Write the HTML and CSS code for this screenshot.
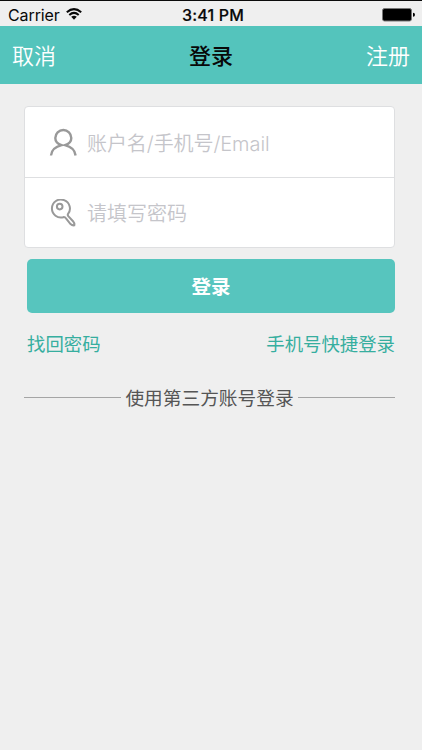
FILE: index.html
```html
<!DOCTYPE html>
<html lang="zh-CN">
<head>
<meta charset="utf-8">
<title>登录</title>
<link rel="stylesheet" href="styles.css">
</head>
<body>
<header class="status">
  <div class="carrier"><span>Carrier</span>
    <svg class="wifi" width="16" height="12" viewBox="0 0 16 12"><g fill="none" stroke="#080808" stroke-width="2"><path d="M.8 4.200Q8-2 15.200 4.200"/><path d="M3.300 7Q8 2.800 12.700 7"/></g><path d="M5.200 8.800Q8 6.500 10.800 8.800L8 11.800Z" fill="#080808"/></svg>
  </div>
  <time class="clock">3:41 PM</time>
  <svg class="battery" width="33" height="14" viewBox="0 0 33 14"><rect x=".5" y=".5" width="29" height="12.500" rx="2" fill="#000" stroke="#777"/><path d="M31 4.800Q33 5 33 6.800T31 8.800Z" fill="#000"/></svg>
</header>
<nav class="nav">
  <a class="nav-left">取消</a>
  <h1>登录</h1>
  <a class="nav-right">注册</a>
</nav>
<main>
  <div class="fields">
    <label class="field">
      <svg class="icon" width="28" height="28" viewBox="0 0 28 28"><path d="M2 27.500C2.500 22.500 6 18.800 12.600 17.200C9 16 6.300 13.500 6.300 10A8 8 0 0 1 22.300 10C22.300 13.500 19.600 16 16 17.200C22.500 18.800 26 22.500 26.600 27.500"/></svg>
      <span>账户名/手机号/Email</span>
    </label>
    <label class="field">
      <svg class="icon" width="28" height="28" viewBox="0 0 28 28"><path d="M14.600 18.100A9 9 0 1 1 18.900 15.200Q18.500 16.200 19.300 17.200L24 22.200Q25.800 24.500 25.300 26.300Q23.300 26.700 21.500 25L17 19.300Q16.100 18 14.600 18.100Z"/><circle cx="10.700" cy="7.600" r="2.800"/></svg>
      <span>请填写密码</span>
    </label>
  </div>
  <button class="submit">登录</button>
  <div class="links"><a>找回密码</a><a>手机号快捷登录</a></div>
  <div class="divider"><span>使用第三方账号登录</span></div>
</main>
</body>
</html>
```
FILE: styles.css
```css
* { box-sizing: border-box; }
body {
  margin: 0;
  height: 750px;
  background: #efefef;
  border-top: 1px solid #0b0b0b;
  font-family: Inter, "Noto Sans CJK SC", sans-serif;
  overflow: hidden;
}
.status {
  height: 25px;
  display: grid;
  grid-template-columns: 1fr auto 1fr;
  align-items: center;
  padding: 2px 7px 0 8px;
  color: #080808;
  font-size: 16px;
  line-height: 22px;
}
.carrier { display: flex; align-items: center; gap: 6px; letter-spacing: -.1px; }
.wifi { margin-top: -2px; }
.clock { font-weight: 500; letter-spacing: .15px; padding-left: 3px; -webkit-text-stroke: .2px #080808; }
.battery { justify-self: end; }
.nav {
  height: 58px;
  display: grid;
  grid-template-columns: 1fr auto 1fr;
  align-items: center;
  padding: 2px 12px 0;
  background: #54c4bc;
  color: #fff;
  font-size: 22px;
  font-weight: 350;
  line-height: 32px;
}
.nav h1 {
  margin: 0;
  color: #080808;
  font-size: 22px;
  font-weight: 500;
}
.nav-right { text-align: right; }
main { padding: 22px 27px 0 24px; }
.fields {
  height: 142px;
  background: #fff;
  border: 1px solid #dedfe1;
  border-radius: 4px;
}
.field {
  height: 70px;
  display: flex;
  align-items: center;
  gap: 10px;
  padding-left: 24px;
  color: #c5c5ca;
  font-size: 20px;
  font-weight: 350;
  line-height: 30px;
}
.field span { padding-top: 3px; }
.field:first-child span { letter-spacing: -.08px; }
.field + .field { border-top: 1px solid #dedfe1; }
.field + .field span { padding-top: 2px; }
.icon { fill: none; stroke: #999; stroke-width: 2.400; }
.field + .field .icon { stroke-width: 2; }
.submit {
  display: block;
  width: 368px;
  height: 54px;
  margin: 11px 0 0 3px;
  padding: 2px 0 0;
  border: 0;
  border-radius: 5px;
  background: #57c5be;
  color: #fff;
  font: 700 19.500px/28px Inter, "Noto Sans CJK SC", sans-serif;
}
.links {
  display: flex;
  justify-content: space-between;
  padding-left: 3px;
  margin-top: 17px;
  color: #36ae9f;
  font-size: 18.400px;
  line-height: 28px;
}
.divider {
  display: flex;
  align-items: center;
  gap: 4px;
  margin-top: 23px;
  color: #555;
  font-size: 18.700px;
  line-height: 28px;
}
.divider span { padding-top: 4px; }
.divider::before, .divider::after {
  content: "";
  flex: 1;
  height: 1px;
  background: #a5a5a5;
}
```
